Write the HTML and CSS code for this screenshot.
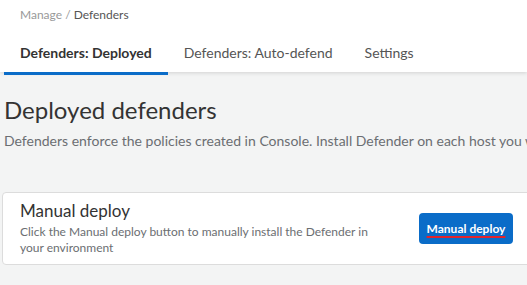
FILE: index.html
```html
<!DOCTYPE html>
<html lang="en">
<head>
  <meta charset="UTF-8" />
  <title>Defenders</title>
  <link rel="stylesheet" href="styles.css">
</head>
<body>

  <header>
    <div class="breadcrumb">
      <span class="crumb-muted">Manage /</span> <span class="crumb-current">Defenders</span>
    </div>
    <nav class="tabs">
      <a class="tab active">Defenders: Deployed</a>
      <a class="tab">Defenders: Auto-defend</a>
      <a class="tab">Settings</a>
    </nav>
  </header>

  <main>
    <section class="intro">
      <h1>Deployed defenders</h1>
      <p>Defenders enforce the policies created in Console. Install Defender on each host you want to protect.</p>
    </section>

    <!-- Manual deploy card -->
    <div class="card">
      <div class="card-text">
        <h2>Manual deploy</h2>
        <p>Click the Manual deploy button to manually install the Defender in your environment</p>
      </div>
      <button class="btn"><span class="btn-label">Manual deploy</span></button>
    </div>
  </main>

</body>
</html>
```

FILE: styles.css
```css
* { margin: 0; padding: 0; box-sizing: border-box; }
body {
  font-family: Lato, "Open Sans", sans-serif;
  background: #f3f4f4;
  color: #333;
  overflow: hidden;
}

header {
  background: #fff;
  height: 72px;
  padding-top: 7px;
  box-shadow: 0 1px 4px rgba(0,0,0,0.14);
  position: relative;
}

.breadcrumb {
  padding-left: 20px;
  font-size: 12px;
  line-height: 16px;
}

.crumb-muted { color: #999; }
.crumb-current { color: #555; }

.tabs {
  display: flex;
  padding-left: 4px;
  margin-top: 20px;
}

.tab {
  font-size: 14px;
  line-height: 20px;
  padding: 0 16px 9px;
  color: #555;
  border-bottom: 3px solid transparent;
  white-space: nowrap;
}

.tab.active {
  color: #333;
  font-weight: 700;
  border-bottom-color: #0a6cc8;
}

/* --- Page intro --- */
.intro {
  padding: 23px 0 0 4px;
}

.intro h1 {
  font-size: 24px;
  line-height: 30px;
  font-weight: 400;
  color: #333;
}

.intro p {
  margin-top: 6px;
  font-size: 14px;
  line-height: 20px;
  color: #6b6e72;
  white-space: nowrap;
}

/* --- Card --- */
.card {
  margin: 41px 0 0 2px;
  width: 530px;
  background: #fff;
  border: 1px solid #dcdcdc;
  border-radius: 4px;
  padding: 7px 18px 8px 17px;
  display: flex;
  align-items: center;
  justify-content: space-between;
}

.card-text {
  max-width: 360px;
}

.card h2 {
  font-size: 17px;
  line-height: 22px;
  font-weight: 400;
  color: #333;
}

.card p {
  margin-top: 2px;
  font-size: 12px;
  line-height: 16px;
  color: #6b6e72;
}

.btn {
  background: #0a6cc8;
  color: #fff;
  border: none;
  border-radius: 4px;
  width: 94px;
  height: 31px;
  font-family: inherit;
  font-size: 12px;
  font-weight: 700;
  cursor: pointer;
}

.btn-label {
  text-decoration: underline;
  text-decoration-color: #e3232b;
  text-decoration-thickness: 2px;
  text-underline-offset: 3px;
}
```
